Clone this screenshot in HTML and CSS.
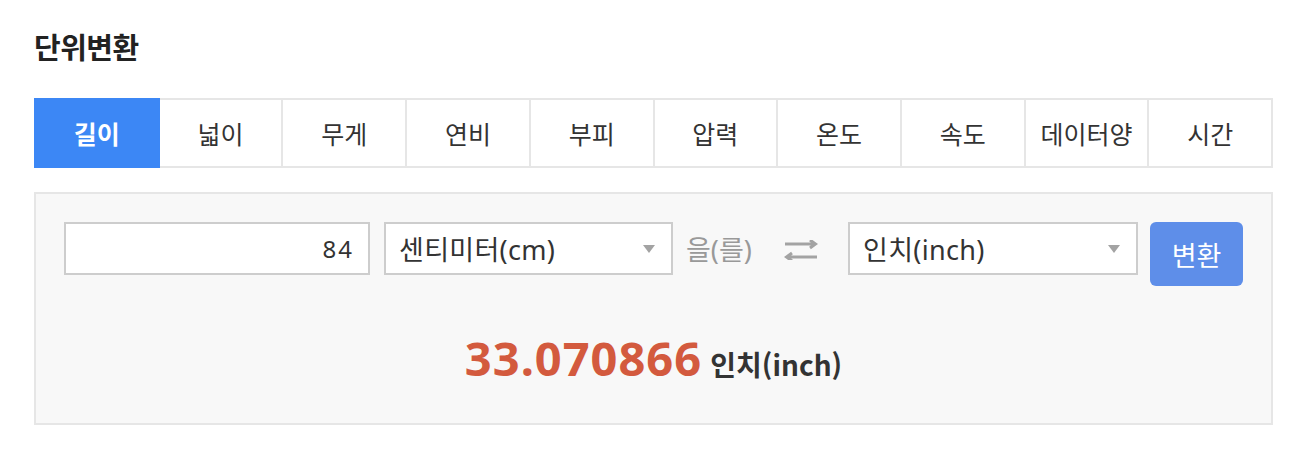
FILE: index.html
```html
<!DOCTYPE html>
<html lang="ko">
<head>
<meta charset="utf-8">
<title>단위변환</title>
<link rel="stylesheet" href="styles.css">
</head>
<body>
<div class="converter">
  <h2 class="title">단위변환</h2>
  <ul class="tabs">
    <li class="tab active">길이</li>
    <li class="tab">넓이</li>
    <li class="tab">무게</li>
    <li class="tab">연비</li>
    <li class="tab">부피</li>
    <li class="tab">압력</li>
    <li class="tab">온도</li>
    <li class="tab">속도</li>
    <li class="tab">데이터양</li>
    <li class="tab">시간</li>
  </ul>
  <div class="panel">
    <div class="form-row">
      <div class="field value-input">84</div>
      <div class="field select"><span>센티미터(cm)</span><i class="caret"></i></div>
      <div class="particle">을(를)</div>
      <div class="swap">
        <svg width="34" height="20" viewBox="0 0 34 20" aria-hidden="true">
          <path d="M1 4 H31 M26 0 L31.5 4 L26 8" fill="none" stroke="#a3a3a3" stroke-width="3"/>
          <path d="M33 17 H3 M8 13 L2.5 17 L8 21" fill="none" stroke="#a3a3a3" stroke-width="3"/>
        </svg>
      </div>
      <div class="field select second"><span>인치(inch)</span><i class="caret"></i></div>
      <button class="convert-btn">변환</button>
    </div>
    <div class="result">
      <span class="result-num">33.070866</span>
      <span class="result-unit">인치(inch)</span>
    </div>
  </div>
</div>
</body>
</html>
```

FILE: styles.css
```css
* { box-sizing: border-box; }
html, body { margin: 0; padding: 0; background: #fff; }
body {
  font-family: "Noto Sans", "Noto Sans CJK KR", sans-serif;
  color: #333;
}
.converter {
  padding: 26px 39px 0 34px;
}
.title {
  margin: 0;
  font-family: "Noto Sans CJK KR", sans-serif;
  font-size: 29px;
  font-weight: 700;
  color: #222;
  line-height: 40px;
  letter-spacing: -0.5px;
}
.tabs {
  list-style: none;
  margin: 32px 0 0;
  padding: 0;
  display: flex;
}
.tab {
  flex: 1;
  height: 70px;
  margin-left: -2px;
  border: 2px solid #e6e6e6;
  background: #fff;
  display: flex;
  align-items: center;
  justify-content: center;
  font-size: 25px;
  color: #333;
  font-family: "Noto Sans CJK KR", sans-serif;
}
.tab:first-child { margin-left: 0; }
.tab.active {
  background: #3c87f5;
  border-color: #3c87f5;
  color: #fff;
  font-weight: 700;
  position: relative;
  z-index: 1;
}
.panel {
  margin-top: 24px;
  height: 233px;
  border: 2px solid #e6e6e6;
  background: #f8f8f8;
  padding: 28px 0 0 28px;
}
.form-row {
  display: flex;
  align-items: flex-start;
}
.field {
  height: 53px;
  border: 2px solid #cdcdcd;
  background: #fff;
  font-size: 27px;
  color: #333;
  display: flex;
  align-items: center;
}
.value-input {
  width: 306px;
  justify-content: flex-end;
  padding-right: 14px;
  font-size: 24px;
  letter-spacing: 2px;
}
.select {
  width: 289px;
  margin-left: 14px;
  padding: 0 16px 0 13px;
  justify-content: space-between;
  letter-spacing: 0.3px;
}
.select.second { margin-left: 30px; width: 290px; }
.caret {
  width: 0;
  height: 0;
  border-left: 6px solid transparent;
  border-right: 6px solid transparent;
  border-top: 8px solid #a3a3a3;
}
.particle {
  width: 69px;
  height: 53px;
  display: flex;
  align-items: center;
  margin-left: 13px;
  font-size: 27px;
  color: #999;
  white-space: nowrap;
}
.swap {
  height: 53px;
  display: flex;
  align-items: center;
  margin-left: 29px;
  padding-top: 2px;
}
.convert-btn {
  margin-left: 12px;
  width: 93px;
  height: 64px;
  border: 0;
  border-radius: 6px;
  background: #5e8ee9;
  color: #fff;
  font-family: "Noto Sans CJK KR", sans-serif;
  font-size: 27px;
  padding: 0;
}
.result {
  margin-top: 42px;
  margin-left: -28px;
  text-align: center;
  line-height: 60px;
}
.result-num {
  font-size: 47px;
  font-weight: 700;
  color: #d35a3e;
  letter-spacing: 1px;
}
.result-unit {
  font-family: "Noto Sans CJK KR", sans-serif;
  font-size: 28px;
  font-weight: 700;
  color: #333;
  margin-left: 4px;
}
```
